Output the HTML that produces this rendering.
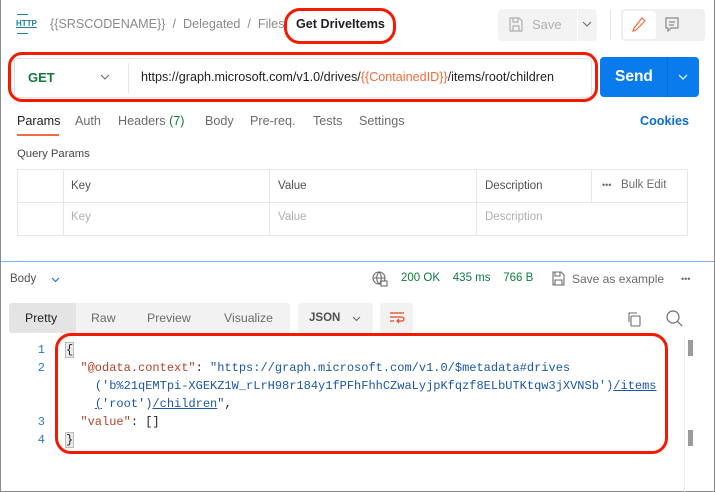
<!DOCTYPE html>
<html><head><meta charset="utf-8"><style>
*{margin:0;padding:0;box-sizing:border-box}
body{width:715px;height:492px;overflow:hidden;background:#fff;font-family:"Liberation Sans",sans-serif;position:relative;color:#212121}
.a{position:absolute;white-space:nowrap}
.mono{font-family:"Liberation Mono",monospace;font-size:12px}
</style></head><body>
<div class="a" style="left:0;top:0;width:715px;height:492px;border:1px solid #8a8a8a;border-top:none"></div>
<!-- top bar -->
<div class="a" style="left:16px;top:19px;font-size:8px;color:#1b7fa0;font-weight:bold;text-decoration:underline">HTTP</div>
<div class="a" style="left:17px;top:14px;width:11px;border-top:1px solid #1b7fa0"></div>
<div class="a" style="left:17px;top:33px;width:11px;border-top:1px solid #1b7fa0"></div>
<div class="a" style="left:50px;top:17px;font-size:12.6px;color:#8a8a8a">{{SRSCODENAME}}&nbsp; /&nbsp; Delegated&nbsp; /&nbsp; Files</div>
<div class="a" style="left:296px;top:17px;font-size:12.6px;font-weight:bold;color:#212121">Get DriveItems</div>
<div class="a" style="left:284px;top:8px;width:112px;height:36px;border:3px solid #f21a00;border-radius:16px;background:transparent"></div>
<div class="a" style="left:498px;top:9px;width:99px;height:32px;background:#f3f3f3;border-radius:4px"></div>
<div class="a" style="left:577px;top:9px;width:1px;height:32px;background:#fff"></div>
<svg class="a" style="left:509px;top:17px" width="14" height="15" viewBox="0 0 14 15" fill="none" stroke="#b0b0b0" stroke-width="1.2"><path d="M1 1h9l3 3v10H1z M4 1v4h5V1 M4 14V9h6v5"/></svg>
<div class="a" style="left:532px;top:17px;font-size:13px;color:#b0b0b0">Save</div>
<svg class="a" style="left:582px;top:21px" width="10" height="6" viewBox="0 0 10 6" fill="none" stroke="#6b6b6b" stroke-width="1.1"><path d="M1 1l4 4 4-4"/></svg>
<div class="a" style="left:610px;top:10px;width:1px;height:30px;background:#e6e6e6"></div>
<div class="a" style="left:621px;top:9px;width:84px;height:32px;background:#f0f0f0;border-radius:4px"></div>
<div class="a" style="left:623px;top:11px;width:33px;height:28px;background:#fff;border-radius:3px"></div>
<svg class="a" style="left:632px;top:17px" width="14" height="15" viewBox="0 0 14 15" fill="none" stroke="#f26b3a" stroke-width="1.2"><path d="M10 1l3 3-9 9-3 1 1-3z"/></svg>
<svg class="a" style="left:665px;top:17px" width="14" height="15" viewBox="0 0 14 15" fill="none" stroke="#8a8a8a" stroke-width="1.2"><path d="M1 1h12v10H6l-3 3v-3H1z M4 5h6 M4 8h5"/></svg>
<!-- url bar -->
<div class="a" style="left:14px;top:58px;width:578px;height:40px;border:1px solid #e0e0e0;border-radius:4px"></div>
<div class="a" style="left:28px;top:70px;font-size:13px;font-weight:bold;color:#0f7b3d">GET</div>
<svg class="a" style="left:100px;top:74px" width="10" height="6" viewBox="0 0 10 6" fill="none" stroke="#6b6b6b" stroke-width="1.1"><path d="M1 1l4 4 4-4"/></svg>
<div class="a" style="left:128px;top:63px;width:1px;height:30px;background:#e6e6e6"></div>
<div class="a" style="left:141px;top:70px;font-size:12.6px;color:#212121">https://graph.microsoft.com/v1.0/drives/<span style="color:#f26b3a">{{ContainedID}}</span>/items/root/children</div>
<div class="a" style="left:8px;top:52px;width:590px;height:50px;border:3.5px solid #f21a00;border-radius:14px"></div>
<div class="a" style="left:600px;top:57px;width:99px;height:40px;background:#097bed;border-radius:4px"></div>
<div class="a" style="left:667px;top:57px;width:1px;height:40px;background:#0868cc"></div>
<div class="a" style="left:615px;top:68px;font-size:15.5px;font-weight:bold;color:#fff">Send</div>
<svg class="a" style="left:678px;top:74px" width="10" height="6" viewBox="0 0 10 6" fill="none" stroke="#fff" stroke-width="1.2"><path d="M1 1l4 4 4-4"/></svg>
<!-- tabs -->
<div class="a" style="top:114px;left:17px;font-size:12.6px;color:#212121">Params</div>
<div class="a" style="top:114px;left:75px;font-size:12.6px;color:#6b6b6b">Auth</div>
<div class="a" style="top:114px;left:118px;font-size:12.6px;color:#6b6b6b">Headers <span style="color:#0f7b3d">(7)</span></div>
<div class="a" style="top:114px;left:205px;font-size:12.6px;color:#6b6b6b">Body</div>
<div class="a" style="top:114px;left:250px;font-size:12.6px;color:#6b6b6b">Pre-req.</div>
<div class="a" style="top:114px;left:313px;font-size:12.6px;color:#6b6b6b">Tests</div>
<div class="a" style="top:114px;left:359px;font-size:12.6px;color:#6b6b6b">Settings</div>
<div class="a" style="top:114px;left:640px;font-size:12.6px;font-weight:bold;color:#0b6dd6">Cookies</div>
<div class="a" style="left:17px;top:134px;width:42px;height:2px;background:#f26b3a"></div>
<!-- query params -->
<div class="a" style="left:17px;top:148px;font-size:11.3px;color:#444">Query Params</div>
<div class="a" style="left:17px;top:169px;width:671px;height:67px;border:1px solid #e6e6e6"></div>
<div class="a" style="left:17px;top:202px;width:671px;height:1px;background:#e6e6e6"></div>
<div class="a" style="left:63px;top:169px;width:1px;height:67px;background:#e6e6e6"></div>
<div class="a" style="left:269px;top:169px;width:1px;height:67px;background:#e6e6e6"></div>
<div class="a" style="left:476px;top:169px;width:1px;height:67px;background:#e6e6e6"></div>
<div class="a" style="left:591px;top:169px;width:1px;height:33px;background:#e6e6e6"></div>
<div class="a" style="left:71px;top:180px;font-size:11.5px;color:#505050">Key</div>
<div class="a" style="left:278px;top:180px;font-size:11.5px;color:#505050">Value</div>
<div class="a" style="left:485px;top:180px;font-size:11.5px;color:#505050">Description</div>
<div class="a" style="left:602px;top:179px;font-size:11.5px;color:#6b6b6b"><span style="font-size:9px">•••</span>&nbsp;&nbsp; Bulk Edit</div>
<div class="a" style="left:71px;top:211px;font-size:11.5px;color:#b0b0b0">Key</div>
<div class="a" style="left:278px;top:211px;font-size:11.5px;color:#b0b0b0">Value</div>
<div class="a" style="left:485px;top:211px;font-size:11.5px;color:#b0b0b0">Description</div>
<div class="a" style="left:1px;top:261px;width:713px;height:1px;background:#7fb4ef"></div>
<!-- response -->
<div class="a" style="left:10px;top:273px;font-size:11.5px;color:#505050">Body</div>
<svg class="a" style="left:51px;top:277px" width="9" height="6" viewBox="0 0 9 6" fill="none" stroke="#0b6dd6" stroke-width="1.1"><path d="M1 1l3.5 3.5L8 1"/></svg>
<svg class="a" style="left:372px;top:271px" width="16" height="16" viewBox="0 0 16 16" fill="none" stroke="#6b6b6b" stroke-width="1.1"><circle cx="7" cy="7" r="6"/><path d="M1 7h12M7 1c-3 3-3 9 0 12M7 1c3 3 3 9 0 12"/><rect x="9" y="10" width="6" height="5" fill="#fff"/></svg>
<div class="a" style="left:401px;top:272px;font-size:11.5px;color:#0f7b3d">200 OK &nbsp;&nbsp;&nbsp;435 ms &nbsp;&nbsp;&nbsp;766 B</div>
<svg class="a" style="left:552px;top:271px" width="13" height="15" viewBox="0 0 13 15" fill="none" stroke="#6b6b6b" stroke-width="1.1"><path d="M1 1h8l3 3v10H1z M3 1v4h5V1 M3 14V9h7v5"/></svg>
<div class="a" style="left:572px;top:272px;font-size:12px;color:#6b6b6b">Save as example</div>
<div class="a" style="left:681px;top:274px;font-size:9px;color:#6b6b6b">•••</div>
<div class="a" style="left:9px;top:303px;width:281px;height:30px;background:#f2f2f2;border-radius:3px"></div>
<div class="a" style="left:9px;top:303px;width:67px;height:30px;background:#e4e4e4;border-radius:3px 0 0 3px"></div>
<div class="a" style="left:25px;top:311px;font-size:12.3px;color:#212121">Pretty</div>
<div class="a" style="left:91px;top:311px;font-size:12.3px;color:#6b6b6b">Raw</div>
<div class="a" style="left:147px;top:311px;font-size:12.3px;color:#6b6b6b">Preview</div>
<div class="a" style="left:224px;top:311px;font-size:12.3px;color:#6b6b6b">Visualize</div>
<div class="a" style="left:298px;top:303px;width:75px;height:30px;background:#f2f2f2;border-radius:3px"></div>
<div class="a" style="left:309px;top:312px;font-size:11.5px;font-weight:bold;color:#505050">JSON</div>
<svg class="a" style="left:352px;top:316px" width="9" height="6" viewBox="0 0 9 6" fill="none" stroke="#6b6b6b" stroke-width="1.1"><path d="M1 1l3.5 3.5L8 1"/></svg>
<div class="a" style="left:380px;top:303px;width:33px;height:30px;background:#f2f2f2;border-radius:3px"></div>
<svg class="a" style="left:389px;top:311px" width="16" height="14" viewBox="0 0 16 14" fill="none" stroke="#e0491e" stroke-width="1.2"><path d="M1 2h14M1 6h12a2 2 0 010 4H8M10 8l-2 2 2 2M1 10h4"/></svg>
<svg class="a" style="left:626px;top:311px" width="16" height="16" viewBox="0 0 16 16" fill="none" stroke="#6b6b6b" stroke-width="1.1"><rect x="5" y="5" width="9" height="10" rx="1"/><path d="M3 11V2h8"/></svg>
<svg class="a" style="left:666px;top:310px" width="17" height="17" viewBox="0 0 17 17" fill="none" stroke="#6b6b6b" stroke-width="1.2"><circle cx="7" cy="7" r="6"/><path d="M11.5 11.5l4.5 4.5"/></svg>
<!-- code -->
<div class="a mono" style="left:34px;top:341px;line-height:18px;color:#2b7bb9;text-align:right;width:11px">1<br>2<br><br><br>3<br>4</div>
<div class="a mono" style="left:66px;top:341px;line-height:18px;color:#212121">
<span style="background:#ececec;outline:1px solid #bbb">{</span><br>
&nbsp;&nbsp;<span style="color:#b5412a">"@odata.context"</span>: <span style="color:#1a57a8">"https://graph.microsoft.com/v1.0/$metadata#drives</span><br>
&nbsp;&nbsp;&nbsp;&nbsp;<span style="color:#1a57a8">('b%21qEMTpi-XGEKZ1W_rLrH98r184y1fPFhFhhCZwaLyjpKfqzf8ELbUTKtqw3jXVNSb')<u>/items</u></span><br>
&nbsp;&nbsp;&nbsp;&nbsp;<span style="color:#1a57a8"><u>(</u>'root')<u>/children</u>"</span>,<br>
&nbsp;&nbsp;<span style="color:#b5412a">"value"</span>: []<br>
<span style="background:#ececec;outline:1px solid #bbb">}</span></div>
<div class="a" style="left:55px;top:333px;width:613px;height:121px;border:3.5px solid #f21a00;border-radius:16px"></div>
<div class="a" style="left:688px;top:340px;width:5px;height:16px;background:#9a9a9a"></div>
<div class="a" style="left:688px;top:430px;width:5px;height:16px;background:#9a9a9a"></div>
<div class="a" style="left:684px;top:336px;width:1px;height:156px;background:#eee"></div>
</body></html>
